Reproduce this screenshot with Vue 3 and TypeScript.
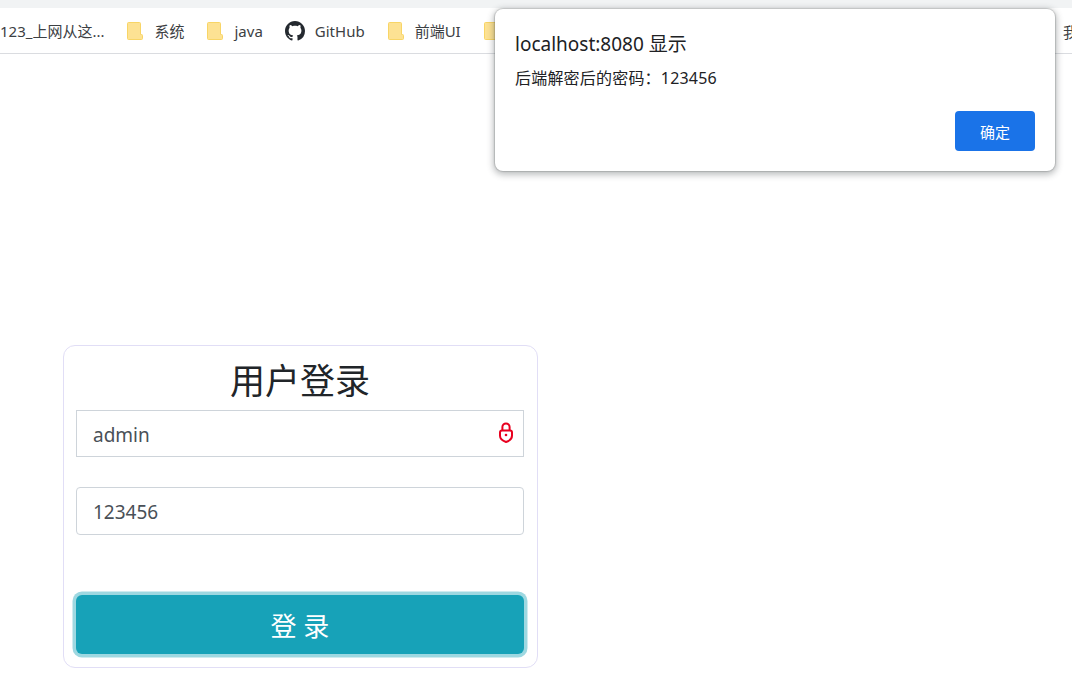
<script setup lang="ts">
interface Mark { label: string; kind: 'none' | 'folder' | 'github' }
const marks: Mark[] = [
  { label: '123_上网从这...', kind: 'none' },
  { label: '系统', kind: 'folder' },
  { label: 'java', kind: 'folder' },
  { label: 'GitHub', kind: 'github' },
  { label: '前端UI', kind: 'folder' },
  { label: '', kind: 'folder' },
]
</script>

<template>
  <div class="page">
    <div class="strip"></div>
    <nav class="bar">
      <div v-for="m in marks" :key="m.label" class="mark">
        <svg v-if="m.kind === 'folder'" class="folder" width="16" height="18" viewBox="0 0 16 18">
          <path d="M1.500.5h11a1 1 0 0 1 1 1v11h1a1 1 0 0 1 1 1v3a1 1 0 0 1-1 1h-13a1 1 0 0 1-1-1v-15a1 1 0 0 1 1-1z" fill="#fde293" stroke="#f8d566" />
        </svg>
        <svg v-else-if="m.kind === 'github'" class="gh" width="20" height="20" viewBox="0 0 16 16">
          <path fill="#24292f" d="M8 0C3.580 0 0 3.580 0 8c0 3.540 2.290 6.530 5.470 7.590.4.070.55-.17.55-.38 0-.19-.01-.82-.01-1.490-2.010.37-2.530-.49-2.690-.94-.09-.23-.48-.94-.82-1.130-.28-.15-.68-.52-.01-.53.63-.01 1.080.58 1.230.82.72 1.210 1.870.87 2.330.66.070-.52.28-.87.51-1.070-1.780-.2-3.640-.89-3.640-3.950 0-.87.31-1.590.82-2.150-.08-.2-.36-1.020.08-2.120 0 0 .67-.21 2.200.82.64-.18 1.320-.27 2-.27s1.360.09 2 .27c1.530-1.040 2.200-.82 2.200-.82.44 1.100.16 1.920.08 2.120.51.56.82 1.270.82 2.150 0 3.070-1.870 3.750-3.650 3.950.29.250.54.730.54 1.480 0 1.070-.01 1.930-.01 2.200 0 .21.15.46.55.38A8.010 8.010 0 0 0 16 8c0-4.420-3.580-8-8-8z" />
        </svg>
        <span v-if="m.label" class="mark-label">{{ m.label }}</span>
      </div>
      <span class="mark-label tail">我</span>
    </nav>

    <main class="main">
      <form class="card" @submit.prevent>
        <h2 class="title">用户登录</h2>
        <div class="field">
          <input class="input square" value="admin" />
          <svg class="lock" width="14" height="21" viewBox="0 0 14 21" fill="none" stroke="#e8001f" stroke-width="2">
            <path d="M3.400 8.500V5a3.600 3.600 0 0 1 7.200 0v3.500" />
            <path d="M7 20c-3.300-1.100-6-3-6-6.200v-3.300c0-1.200.9-2 2-2h8c1.100 0 2 .8 2 2v3.300c0 3.200-2.700 5.100-6 6.200z" />
            <circle cx="7" cy="13" r="1.300" fill="#e8001f" stroke="none" />
          </svg>
        </div>
        <div class="field second">
          <input class="input" value="123456" />
        </div>
        <button class="submit" type="submit">登 录</button>
      </form>
    </main>

    <div class="dialog" role="alertdialog">
      <div class="dialog-title">localhost:8080 显示</div>
      <div class="dialog-msg">后端解密后的密码：123456</div>
      <div class="dialog-actions">
        <button class="ok" type="button">确定</button>
      </div>
    </div>
  </div>
</template>

<style>
html, body { margin: 0; background: #fff; }
</style>

<style scoped>
.page {
  position: relative;
  height: 700px;
  overflow: hidden;
  background: #fff;
  font-family: "Noto Sans", "Noto Sans CJK SC", sans-serif;
}
.strip { height: 8px; background: #f1f3f4; }
.bar {
  position: relative;
  display: flex;
  align-items: center;
  gap: 22px;
  height: 45px;
  border-bottom: 1px solid #dadce0;
  white-space: nowrap;
}
.mark { display: flex; align-items: center; gap: 12px; height: 45px; }
.mark-label { font-size: 15px; color: #3c4043; }
.folder { margin: 0 -1px 0 1px; }
.gh { margin-right: -2px; }
.tail { position: absolute; right: -6px; top: 13px; }
.main { padding: 291px 0 0 63px; }
.card {
  width: 475px;
  height: 323px;
  box-sizing: border-box;
  padding: 0 13px 0 12px;
  border: 1px solid #e1def6;
  border-radius: 12px;
  background: #fff;
}
.title {
  margin: 0;
  height: 64px;
  padding-top: 6px;
  box-sizing: border-box;
  font-size: 35px;
  font-weight: 400;
  line-height: 58px;
  text-align: center;
  color: #212529;
}
.field { position: relative; }
.second { margin-top: 30px; }
.input {
  display: block;
  width: 100%;
  height: 48px;
  box-sizing: border-box;
  padding: 2px 16px 0;
  border: 1px solid #ced4da;
  border-radius: 4px;
  outline: none;
  font: inherit;
  font-size: 19px;
  color: #495057;
  background: #fff;
}
.square { height: 47px; border-radius: 0; }
.lock { position: absolute; top: 12px; right: 11px; }
.submit {
  display: block;
  width: 100%;
  height: 59px;
  margin-top: 60px;
  border: 0;
  border-radius: 6px;
  background: #17a2b8;
  box-shadow: 0 0 0 3.500px rgba(23, 162, 184, 0.42);
  font: inherit;
  font-size: 26px;
  color: #fff;
}
.dialog {
  position: absolute;
  left: 495px;
  top: 9px;
  width: 560px;
  height: 162px;
  box-sizing: border-box;
  padding: 21px 20px 20px;
  border-radius: 8px;
  background: #fff;
  box-shadow: 0 0 1px 1px rgba(60, 64, 67, 0.2), 0 2px 6px 2px rgba(60, 64, 67, 0.32);
}
.dialog-title { font-size: 19px; line-height: 28px; color: #202124; }
.dialog-msg { margin-top: 8px; font-size: 16px; letter-spacing: 0.2px; line-height: 24px; color: #202124; }
.dialog-actions { display: flex; justify-content: flex-end; margin-top: 21px; }
.ok {
  width: 80px;
  height: 40px;
  border: 0;
  border-radius: 4px;
  background: #1a73e8;
  font: inherit;
  font-size: 15px;
  color: #fff;
}
</style>
